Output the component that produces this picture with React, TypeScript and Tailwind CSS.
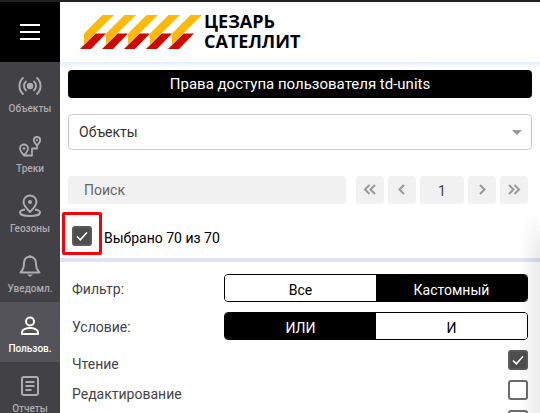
import { useState } from "react";
import type { ReactNode } from "react";
import clsx from "clsx";

const strokeProps = {
  fill: "none",
  stroke: "currentColor",
  strokeWidth: 2,
  strokeLinejoin: "round" as const,
};

const NAV_ITEMS: { label: string; icon: ReactNode }[] = [
  {
    label: "Объекты",
    icon: (
      <g {...strokeProps}>
        <circle cx="12" cy="12" r="3.2" fill="currentColor" stroke="none" />
        <path d="M8.5 7a6.2 6.2 0 0 0 0 10M15.5 7a6.2 6.2 0 0 1 0 10" />
        <path d="M5.5 3.5a11 11 0 0 0 0 17M18.5 3.5a11 11 0 0 1 0 17" />
      </g>
    ),
  },
  {
    label: "Треки",
    icon: (
      <g {...strokeProps} strokeWidth={1.8}>
        <path d="M6 21.5C4 19 2 17 2 14.5a4 4 0 0 1 8 0c0 2.500-2 4.500-4 7h8v-7h5v-3" />
        <path d="M19 11.5c-1.800-2-3.200-3.500-3.200-5.300a3.200 3.200 0 0 1 6.400 0c0 1.800-1.400 3.300-3.200 5.300z" />
        <circle cx="6" cy="14.5" r="1.3" fill="currentColor" stroke="none" />
        <circle cx="19" cy="6.3" r="1.1" fill="currentColor" stroke="none" />
      </g>
    ),
  },
  {
    label: "Геозоны",
    icon: (
      <g {...strokeProps}>
        <path d="M12 18c-4-4-6.500-6.500-6.500-10a6.500 6.500 0 0 1 13 0c0 3.500-2.500 6-6.500 10z" />
        <circle cx="12" cy="8" r="2" fill="currentColor" stroke="none" />
        <path d="M7 15.5c-3.500.6-5 1.500-5 2.900C2 20.500 6 22 12 22s10-1.500 10-3.600c0-1.400-1.500-2.300-5-2.900" />
      </g>
    ),
  },
  {
    label: "Уведомл.",
    icon: (
      <g {...strokeProps}>
        <path d="M12 2.800c-4 0-6 2.800-6 6.700C6 13.500 5 16 2.500 18.500h19C19 16 18 13.500 18 9.500c0-3.900-2-6.700-6-6.700z" />
        <circle cx="12" cy="2.5" r="1.5" fill="currentColor" stroke="none" />
        <path d="M9 20.5h6l-3 2.500z" fill="currentColor" stroke="none" />
      </g>
    ),
  },
  {
    label: "Пользов.",
    icon: (
      <g {...strokeProps}>
        <circle cx="12" cy="7.5" r="4" />
        <path d="M4 20v-2c0-2.500 4-4 8-4s8 1.500 8 4v2z" />
      </g>
    ),
  },
  {
    label: "Отчеты",
    icon: (
      <g {...strokeProps}>
        <rect x="4" y="3" width="16" height="18" rx="2" />
        <path d="M7.5 8h9M7.5 12h9M7.5 16h6" />
      </g>
    ),
  },
];

const RIGHTS = ["Чтение", "Редактирование"];

function Logo() {
  return (
    <div className="flex items-center gap-0.5">
      <svg width="122" height="34" viewBox="0 0 122 34" aria-hidden="true">
        {[0, 22, 44, 66, 88].map((x) => (
          <g key={x} transform={`translate(${x} 0)`}>
            <path d="M0 34L15.5 18.500H26L11 34z" fill="#cc0a00" />
            <path d="M4 18.5L22.5 0H34L4 29.500z" fill="#ffba00" />
          </g>
        ))}
      </svg>
      <div className="pb-0.5 font-['Open_Sans',sans-serif] text-[18px] font-bold leading-5 text-black">
        ЦЕЗАРЬ
        <br />
        САТЕЛЛИТ
      </div>
    </div>
  );
}

function Checkbox({ id, label, defaultChecked }: { id: string; label?: string; defaultChecked?: boolean }) {
  return (
    <span className="grid size-5 shrink-0">
      <input
        id={id}
        type="checkbox"
        aria-label={label}
        defaultChecked={defaultChecked}
        className="peer col-start-1 row-start-1 size-5 appearance-none rounded-[3px] border-2 border-[#6b6b6b] bg-white checked:border-[#5a5a5a] checked:bg-[#4d4d4d]"
      />
      <svg
        viewBox="0 0 20 20"
        className="pointer-events-none invisible col-start-1 row-start-1 size-5 peer-checked:visible"
      >
        <path d="M5 10.5l3.300 3.300L15 6.500" fill="none" stroke="#fff" strokeWidth="1.6" />
      </svg>
    </span>
  );
}

function Toggle({ label, options, initial }: { label: string; options: string[]; initial: string }) {
  const [value, setValue] = useState(initial);

  return (
    <div className="grid grid-cols-[152px_1fr] items-center">
      <span className="pt-0.5 text-[#444]">{label}</span>
      <div
        role="group"
        aria-label={label}
        className="grid h-7 grid-cols-2 overflow-hidden rounded border border-black"
      >
        {options.map((option) => (
          <button
            key={option}
            aria-pressed={option === value}
            onClick={() => setValue(option)}
            className={clsx(
              "pt-1 leading-5",
              option === value ? "bg-black text-white" : "bg-white text-black"
            )}
          >
            {option}
          </button>
        ))}
      </div>
    </div>
  );
}

function PageButton({ label, path }: { label: string; path: string }) {
  return (
    <button
      aria-label={label}
      className="flex h-7 w-7 items-center justify-center rounded bg-[#f1f1f1] text-[#999]"
    >
      <svg width="16" height="16" viewBox="0 0 16 16" fill="none" stroke="currentColor" strokeWidth="2">
        <path d={path} />
      </svg>
    </button>
  );
}

export default function App() {
  const [active, setActive] = useState("Пользов.");

  return (
    <div className="flex h-screen flex-col overflow-hidden border-t-2 border-[#222022] bg-white font-[Roboto,sans-serif] text-[14px] leading-5">
      <header className="flex h-15 shrink-0 bg-white">
        <button aria-label="Меню" className="flex w-15 items-center justify-center bg-black">
          <svg width="20" height="16" viewBox="0 0 20 16" stroke="#fff" strokeWidth="2">
            <path d="M0 1h20M0 8h20M0 15h20" />
          </svg>
        </button>
        <div className="flex items-center pl-5">
          <Logo />
        </div>
      </header>
      <div className="flex min-h-0 flex-1">
        <nav className="w-15 shrink-0 overflow-hidden bg-[#414146]">
          {NAV_ITEMS.map((item) => (
            <a
              key={item.label}
              href="#"
              onClick={() => setActive(item.label)}
              className={clsx(
                "flex h-15 flex-col items-center gap-[3px] pt-3 text-[10px] leading-4 font-medium",
                item.label === active ? "bg-[#535359] text-white" : "text-[#adadad]"
              )}
            >
              <svg viewBox="0 0 24 24" className="size-6 shrink-0">
                {item.icon}
              </svg>
              {item.label}
            </a>
          ))}
        </nav>
        <main className="relative min-w-0 flex-1 overflow-hidden bg-linear-to-b from-[#e5ecfb] to-white to-[6px]">
          <section className="px-2 pt-2">
            <h1 className="h-7 rounded bg-black text-center text-[15px] leading-7 text-white">
              Права доступа пользователя td-units
            </h1>
            <div className="mt-4 grid items-center">
              <select
                aria-label="Раздел"
                className="col-start-1 row-start-1 h-9 w-full appearance-none rounded border border-[#c8c8c8] bg-white px-2.5 text-[#333]"
              >
                <option>Объекты</option>
              </select>
              <svg
                width="10"
                height="5"
                viewBox="0 0 10 5"
                className="pointer-events-none col-start-1 row-start-1 mr-2.5 justify-self-end"
              >
                <path d="M0 0h10L5 5z" fill="#999" />
              </svg>
            </div>
            <div className="mt-6.5 flex gap-1 pr-1">
              <input
                type="text"
                aria-label="Поиск"
                placeholder="Поиск"
                className="mr-1.5 h-7 min-w-0 flex-1 rounded bg-[#f1f1f1] px-4 placeholder:text-[#666]"
              />
              <PageButton label="Первая страница" path="M7.5 3L3 7.500L7.500 12M13 3L8.500 7.500L13 12" />
              <PageButton label="Назад" path="M10 3L5.500 7.500L10 12" />
              <button className="h-7 w-11 rounded bg-[#f1f1f1] pt-0.5 text-[#444]">1</button>
              <PageButton label="Вперёд" path="M6 3l4.500 4.500L6 12" />
              <PageButton label="Последняя страница" path="M3 3l4.500 4.500L3 12M8.500 3L13 7.500L8.500 12" />
            </div>
          </section>

          <section className="mt-5.5 flex h-9 gap-3 border-b-4 border-[#dfe4f1] px-3">
            <div className="relative">
              <Checkbox id="select-all" defaultChecked />
              <div className="pointer-events-none absolute -top-3.5 -left-2.5 h-[43px] w-10 rounded-xs border-3 border-[#fb0007]" />
            </div>
            <label htmlFor="select-all" className="pt-0.5 text-black">
              Выбрано 70 из 70
            </label>
          </section>

          <section className="flex flex-col gap-2.5 px-3 pt-3">
            <Toggle label="Фильтр:" options={["Все", "Кастомный"]} initial="Кастомный" />
            <Toggle label="Условие:" options={["ИЛИ", "И"]} initial="ИЛИ" />
            {RIGHTS.map((right, i) => (
              <div key={right} className="flex h-5 justify-between text-[#444]">
                <label htmlFor={`right-${i}`} className="pt-1">{right}</label>
                <Checkbox id={`right-${i}`} defaultChecked={i === 0} />
              </div>
            ))}
            <div className="flex h-5 justify-end">
              <Checkbox id="right-extra" label="Удаление" />
            </div>
          </section>
          <div className="pointer-events-none absolute top-37 right-0 -bottom-5 w-5 rounded-tr-full bg-linear-to-l from-black/8 to-transparent mask-t-from-80%" />
        </main>
      </div>
    </div>
  );
}
